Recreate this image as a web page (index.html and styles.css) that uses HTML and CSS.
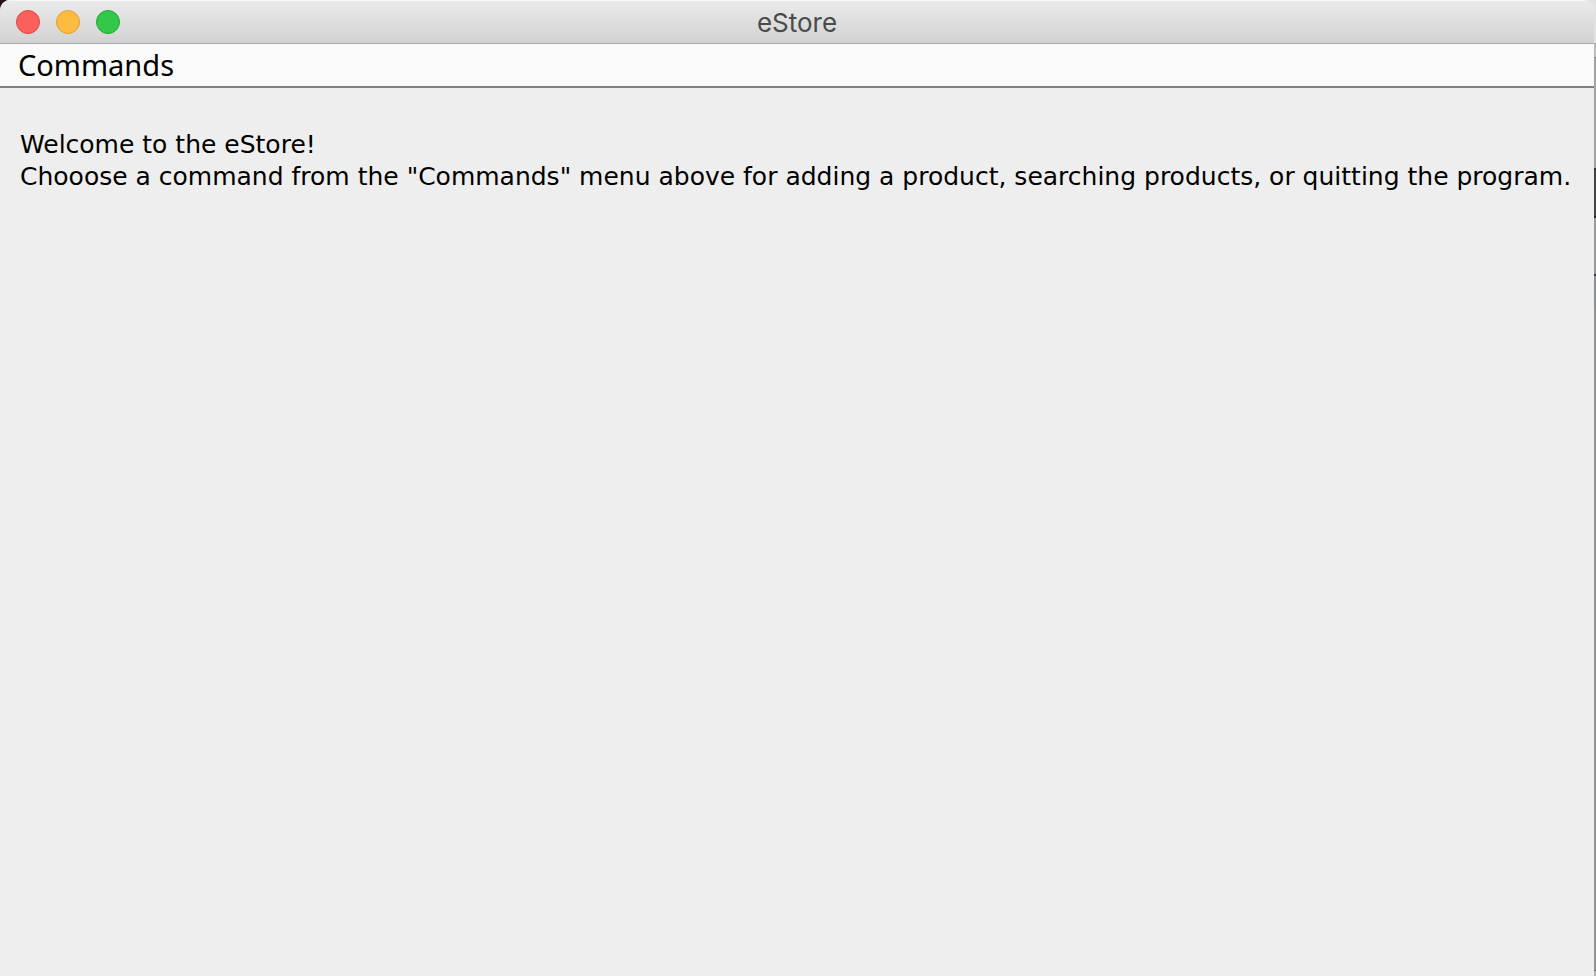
FILE: index.html
```html
<!DOCTYPE html>
<html lang="en">
<head>
<meta charset="utf-8">
<title>eStore</title>
<link rel="stylesheet" href="styles.css">
</head>
<body>
<div class="window">
  <header class="titlebar">
    <div class="controls">
      <button class="control close" type="button" aria-label="Close"></button>
      <button class="control minimize" type="button" aria-label="Minimize"></button>
      <button class="control zoom" type="button" aria-label="Zoom"></button>
    </div>
    <h1 class="title">eStore</h1>
  </header>
  <nav class="menubar">
    <button class="menu" type="button">Commands</button>
  </nav>
  <main class="content">
    <p class="line">Welcome to the eStore!</p>
    <p class="line">Chooose a command from the "Commands" menu above for adding a product, searching products, or quitting the program.</p>
  </main>
</div>
</body>
</html>
```
FILE: styles.css
```css
* { box-sizing: border-box; }
body {
  margin: 0;
  min-height: 100vh;
  display: flex;
  padding-right: 2px;
  color: #000;
  font-family: "DejaVu Sans", "Noto Sans", sans-serif;
  background:
    radial-gradient(circle at 0 0, #2a1216 0 12px, transparent 12px),
    linear-gradient(#e2e2e2 0 43px, #a8a8a8 43px 44px, #bdbdbd 44px 57px, #8a8a8a 57px 58px, #a2a2a2 58px 168px, #303030 168px 170px, #434343 170px 216px, #222 216px 218px, #999 218px 274px, #333 274px 276px, #8b9096 276px 310px, #929292 310px 970px, #666 970px 971px, #b5b5b5 971px);
}
.window {
  flex: 1;
  min-width: 0;
  display: flex;
  flex-direction: column;
  background: #eee;
  border-radius: 10px 10px 0 0;
  overflow: hidden;
}
.titlebar {
  display: grid;
  grid-template-columns: 1fr auto 1fr;
  align-items: center;
  height: 44px;
  padding: 0 16px;
  background: linear-gradient(#ebebeb, #d2d2d2);
  border-bottom: 1px solid #acacac;
  box-shadow: inset 0 1px #f6f6f6;
}
.controls { display: flex; gap: 16px; }
.control {
  width: 24px;
  height: 24px;
  padding: 0;
  border: 1px solid;
  border-radius: 50%;
}
.close { background: #fc605c; border-color: #e2453f; }
.minimize { background: #fdbc40; border-color: #dea034; }
.zoom { background: #34c84a; border-color: #1ead2c; }
.title {
  margin: 0;
  padding-top: 2px;
  color: #4a4a4a;
  font: 400 26px/40px Inter, Roboto, sans-serif;
}
.menubar {
  display: flex;
  height: 44px;
  padding: 0 16px;
  background: #fafafa;
  border-bottom: 2px solid #808080;
}
.menu {
  padding: 0 2px;
  border: 0;
  background: none;
  color: inherit;
  font: 400 29px/42px "Noto Sans", "DejaVu Sans", sans-serif;
}
.content { padding: 41px 20px; }
.line { margin: 0; font-size: 25px; line-height: 32px; }
```
